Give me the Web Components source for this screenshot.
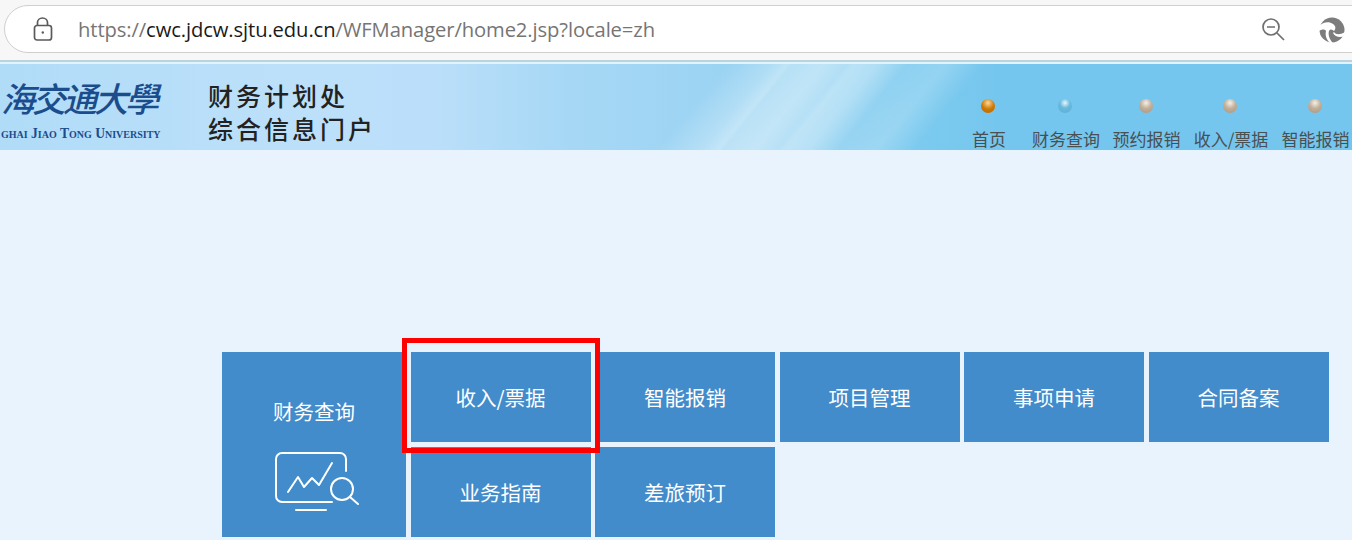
<!doctype html>
<html lang="zh"><head><meta charset="utf-8">
<style>
html,body{margin:0;padding:0;height:540px;overflow:hidden;background:#e8f3fe;font-family:"Noto Sans CJK SC","Liberation Sans",sans-serif}
</style></head><body>
<browser-bar></browser-bar>
<site-banner>
  <nav-item slot="nav" on style="--w:78px">首页</nav-item>
  <nav-item slot="nav" tone="blue" style="--w:76px">财务查询</nav-item>
  <nav-item slot="nav" style="--w:85px">预约报销</nav-item>
  <nav-item slot="nav" style="--w:84px">收入/票据</nav-item>
  <nav-item slot="nav" style="--w:85px">智能报销</nav-item>
</site-banner>
<tile-grid>
  <app-tile big>财务查询<chart-icon slot="icon"></chart-icon></app-tile>
  <app-tile>收入/票据</app-tile>
  <app-tile>智能报销</app-tile>
  <app-tile>项目管理</app-tile>
  <app-tile>事项申请</app-tile>
  <app-tile>合同备案</app-tile>
  <app-tile>业务指南</app-tile>
  <app-tile>差旅预订</app-tile>
</tile-grid>
<script>
function def(name,html){customElements.define(name,class extends HTMLElement{
  constructor(){super();this.attachShadow({mode:'open'}).innerHTML=html;}
});}
def('browser-bar',`<style>
:host{display:block;box-sizing:border-box;height:64px;background:#f7f7f7;padding-top:5px;font-family:"Open Sans","Noto Sans",sans-serif;overflow:hidden}
.url{box-sizing:border-box;height:48px;margin-left:4px;margin-right:-30px;background:#fff;border:1px solid #cfcfcf;border-width:1.5px 1px;border-radius:24px 0 0 24px;display:flex;align-items:center;padding:0 0 0 28px}
.lock{width:20px;height:24px;flex:none;margin-top:-1px}
.t{margin-left:25px;font-size:20.2px;color:#757575;white-space:nowrap;letter-spacing:-.1px}
.t b{font-weight:400;color:#1a1a1a}
.sp{flex:1}
.zoom{width:26px;height:26px;margin-right:33px}
.edge{width:26px;height:26px;margin-right:36px;margin-top:1px}
.line{height:2px;margin-top:7px;background:#b8d4de}
.line2{height:2px;background:#e4f3fb}
</style>
<div class="url">
<svg class="lock" viewBox="0 0 20 24" fill="none" stroke="#5a5a5a" stroke-width="1.7"><rect x="1.5" y="8.5" width="17" height="14.5" rx="2.5"/><path d="M4.5 8.5V5.5a5 4.5 0 0 1 10 0v3"/><circle cx="9.8" cy="15.5" r="1.2" fill="#5a5a5a" stroke="none"/></svg>
<span class="t">https://<b>cwc.jdcw.sjtu.edu.cn</b>/WFManager/home2.jsp?locale=zh</span>
<span class="sp"></span>
<svg class="zoom" viewBox="0 0 26 26" fill="none" stroke="#6f6f6f" stroke-width="1.7"><circle cx="11" cy="11" r="8"/><path d="M7 11h8M17 17l7 7"/></svg>
<svg class="edge" viewBox="0 0 26 26"><circle cx="13" cy="13" r="12.5" fill="#7c7c7c"/><path d="M0 9C4 5 10 4 14 7C17 9 17 12 15 14C13 12 11 12 10 14C9 17 10 22 14 26L11 26C7 22 6 18 7 14C6 12 3 12 0 14z" fill="#fff"/><path d="M15 15C17 18 21 18 26 15L26 19C21 21 16 20 14 16z" fill="#fff"/></svg>
</div>
<div class="line"></div><div class="line2"></div>`);
def('site-banner',`<style>
:host{display:flex;height:86px;overflow:hidden;position:relative;
background:
 linear-gradient(129deg,transparent 565px,rgba(255,255,255,.26) 600px,rgba(255,255,255,.42) 612px,rgba(255,255,255,.34) 616px,rgba(255,255,255,.44) 640px,rgba(255,255,255,.34) 658px,rgba(255,255,255,.42) 664px,rgba(255,255,255,.36) 682px,rgba(255,255,255,.12) 705px,rgba(255,255,255,.2) 735px,transparent 765px),
 linear-gradient(90deg,#b0dcf8 0,#bde0fa 22%,#bbdffa 32%,#a6d8f5 42%,#9dd4f3 52%,#8fd0f1 60%,#7ccaef 68%,#75c6ee 74%,#75c6ee 100%)}
.logo{width:190px;flex:none;position:relative;overflow:hidden}
.cn{position:absolute;left:1px;top:12px;font:italic 500 34px/44px "Noto Sans CJK TC",serif;letter-spacing:-3px;color:#1b4d8c;white-space:nowrap}
.en{position:absolute;left:1px;top:63px;font:700 13.600px/14px "Liberation Serif",serif;color:#1b4d8c;white-space:nowrap;font-variant:small-caps}
.title{margin-left:18px;margin-top:15px;font-size:25px;font-weight:500;line-height:33px;letter-spacing:3px;color:#222;white-space:nowrap}
.sp{flex:1}
.nav{display:flex;margin-right:-6px}
</style>
<div class="logo"><div class="cn">海交通大學</div><div class="en">ghai Jiao Tong University</div></div>
<div class="title">财务计划处<br>综合信息门户</div>
<div class="sp"></div>
<div class="nav"><slot name="nav"></slot></div>`);
def('nav-item',`<style>
:host{display:flex;flex-direction:column;align-items:center;width:var(--w);padding-top:35px;box-sizing:border-box;color:#4a4f52;font-size:17px;line-height:20px;white-space:nowrap}
.dot{width:14px;height:14px;border-radius:50%;margin:0 2px 16px 0;background:radial-gradient(circle at 50% 28%,#f5f0e8 0,#c2b09a 45%,#a8957e 100%)}
:host([on]) .dot{background:radial-gradient(circle at 50% 28%,#fbd79a 0,#d07a02 50%,#b86600 100%)}
:host([tone=blue]) .dot{background:radial-gradient(circle at 50% 28%,#e6f7fc 0,#68b9dd 42%,#5cafd6 100%)}
</style><span class="dot"></span><slot></slot>`);
def('tile-grid',`<style>
:host{display:grid;position:relative;width:max-content;margin:202px 0 0 222px;grid-template-columns:184px repeat(5,180px);grid-template-rows:90px 90px;gap:5px 4.5px}
.mark{position:absolute;left:180px;top:-14px;width:198px;height:115px;box-sizing:border-box;border:5px solid #f00;pointer-events:none}
</style><slot></slot><div class="mark"></div>`);
def('app-tile',`<style>
:host{display:flex;flex-direction:column;align-items:center;justify-content:center;box-sizing:border-box;background:#428ccb;color:#fff;font-size:20.5px;line-height:28px;white-space:nowrap}
:host([big]){grid-row:span 2;justify-content:flex-start;padding-top:45px}
::slotted(chart-icon){margin:27px 0 0 6px}
</style><slot></slot><slot name="icon"></slot>`);
def('chart-icon',`<style>:host{display:block;width:84px;height:60px}svg{display:block}</style>
<svg width="84" height="60" viewBox="0 0 84 60" fill="none" stroke="#fff" stroke-width="2" stroke-linecap="round" stroke-linejoin="round">
<path d="M57 50H7a6 6 0 0 1-6-6V7a6 6 0 0 1 6-6h58a6 6 0 0 1 6 6v12"/>
<path d="M21 58h30"/>
<path d="M13 40l10-15 6 10 8-9 7 7 13-22"/>
<circle cx="67" cy="37" r="11"/>
<path d="M75 45l8 7"/>
</svg>`);
</script>
</body></html>
